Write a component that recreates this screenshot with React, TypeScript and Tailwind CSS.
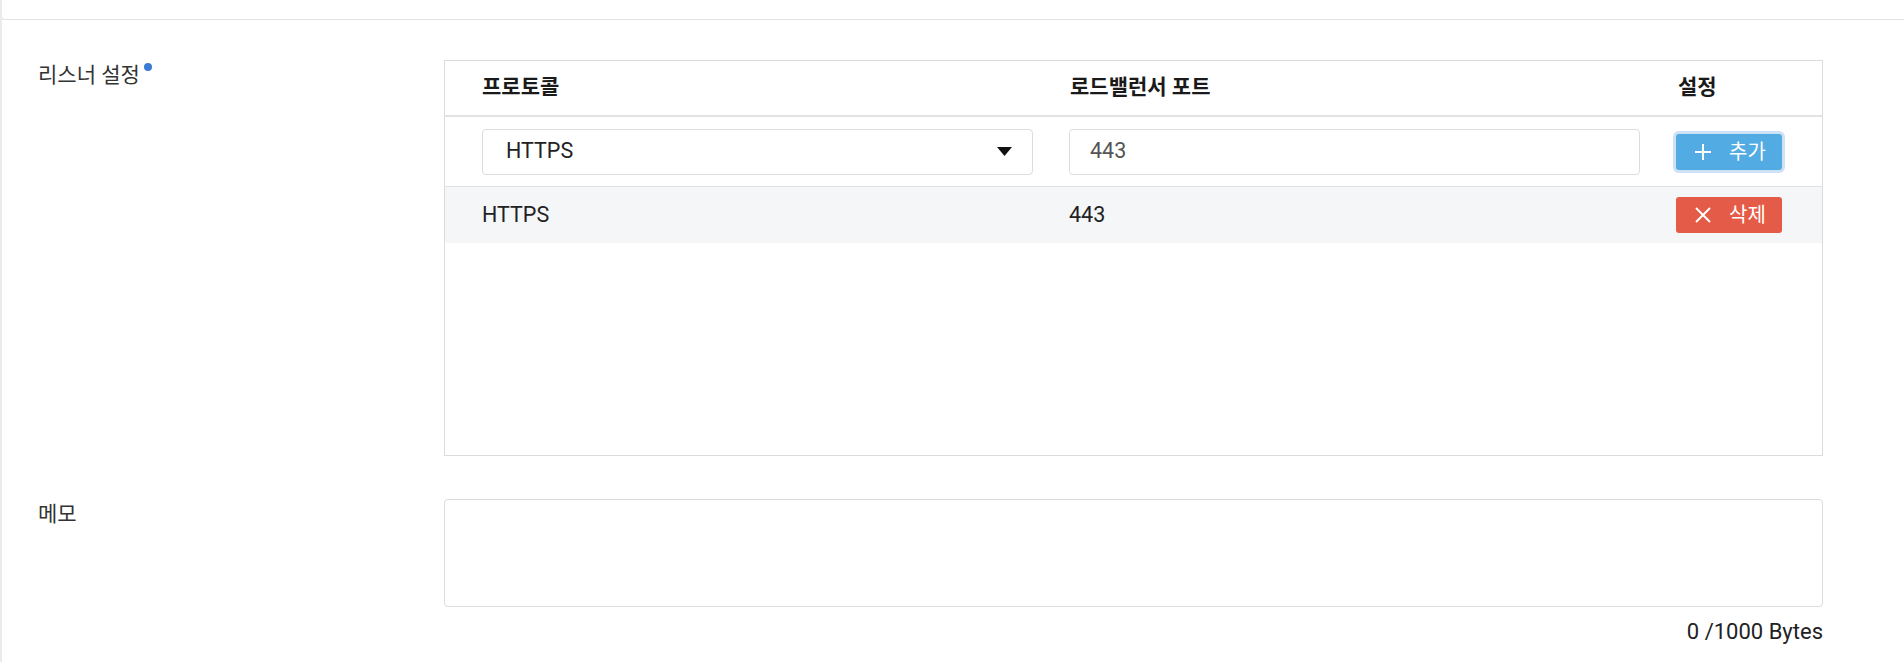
import React, { useState } from 'react';

const FONT = "font-['Roboto','Noto_Sans_CJK_KR',sans-serif]";

// --- Icons ---
const PlusIcon = () => (
  <svg width="18" height="18" viewBox="0 0 18 18" fill="none" stroke="currentColor" strokeWidth="2">
    <line x1="9" y1="1" x2="9" y2="17" />
    <line x1="1" y1="9" x2="17" y2="9" />
  </svg>
);

const CloseIcon = () => (
  <svg width="18" height="18" viewBox="0 0 18 18" fill="none" stroke="currentColor" strokeWidth="2">
    <line x1="2" y1="2" x2="16" y2="16" />
    <line x1="16" y1="2" x2="2" y2="16" />
  </svg>
);

interface Listener {
  protocol: string;
  port: string;
}

const FormRow = ({ label, required, children }: { label: string; required?: boolean; children: React.ReactNode }) => (
  <div className="flex">
    <div className="w-[442px] shrink-0 pl-[36px]">
      <span className="relative text-[21px] leading-[30px] text-[#333]">
        {label}
        {required && <span className="absolute -right-[12px] top-[0px] w-[8px] h-[8px] rounded-full bg-[#3a7bd5]" />}
      </span>
    </div>
    <div className="w-[1379px] shrink-0">{children}</div>
  </div>
);

export default function App() {
  const [protocol] = useState('HTTPS');
  const [port] = useState('443');
  const [listeners] = useState<Listener[]>([{ protocol: 'HTTPS', port: '443' }]);
  const [memo] = useState('');

  return (
    <div className={`${FONT} min-h-screen bg-[#ebebeb] pl-[2px]`}>
      {/* top panel edge */}
      <div className="h-[20px] bg-white border-b border-[#e2e2e2] rounded-bl-[4px]" />

      <div className="bg-white pt-[40px] pb-[40px]">
        {/* 리스너 설정 */}
        <FormRow label="리스너 설정" required>
          <div className="h-[396px] border border-[#dcdcdc] flex flex-col">
            <div className="grid grid-cols-[551px_571px_1fr] gap-x-[37px] pl-[37px] h-[56px] items-center border-b-2 border-[#e2e2e2] text-[21px] font-bold text-[#1a1a1a]">
              <span>프로토콜</span>
              <span>로드밸런서 포트</span>
              <span>설정</span>
            </div>

            <div className="grid grid-cols-[551px_571px_1fr] gap-x-[36px] pl-[37px] h-[70px] items-center border-b border-[#e2e2e2]">
              <div className="h-[46px] border border-[#dcdcdc] rounded-[4px] flex items-center justify-between pl-[23px] pr-[20px] text-[21.5px] text-[#222]">
                <span>{protocol}</span>
                <svg width="15" height="9" viewBox="0 0 15 9">
                  <polygon points="0,0 15,0 7.5,9" fill="#111" />
                </svg>
              </div>
              <div className="h-[46px] border border-[#dcdcdc] rounded-[4px] flex items-center pl-[20px] text-[21.5px] text-[#555]">
                {port}
              </div>
              <div>
                <button className="w-[106px] h-[36px] rounded-[3px] bg-[#52ace3] text-white flex items-center gap-[17px] pl-[18px] text-[20px] ring-[3px] ring-[#cfe1f6]">
                  <PlusIcon />
                  <span>추가</span>
                </button>
              </div>
            </div>

            {listeners.map((l, i) => (
              <div key={i} className="grid grid-cols-[551px_571px_1fr] gap-x-[36px] pl-[37px] h-[56px] items-center bg-[#f5f6f8] text-[21.5px] text-[#222]">
                <span>{l.protocol}</span>
                <span>{l.port}</span>
                <div>
                  <button className="w-[106px] h-[36px] rounded-[3px] bg-[#e45b47] text-white flex items-center gap-[17px] pl-[18px] text-[20px]">
                    <CloseIcon />
                    <span>삭제</span>
                  </button>
                </div>
              </div>
            ))}
          </div>
        </FormRow>

        <div className="h-[43px]" />

        {/* 메모 */}
        <FormRow label="메모">
          <div className="h-[108px] border border-[#dcdcdc] rounded-[4px]" />
          <div className="mt-[13px] text-right text-[22px] leading-[24px] text-[#222]">
            {new TextEncoder().encode(memo).length} /1000 Bytes
          </div>
        </FormRow>
      </div>
    </div>
  );
}
